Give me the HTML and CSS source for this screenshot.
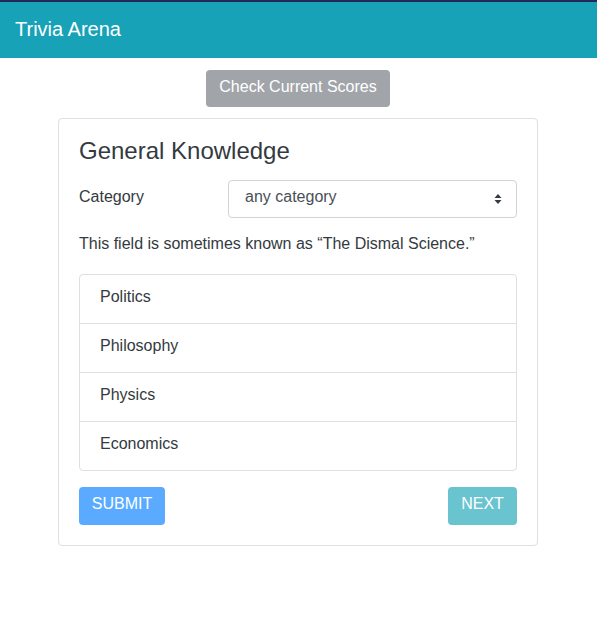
FILE: index.html
```html
<!DOCTYPE html>
<html>
<head>
<meta charset="utf-8">
<link rel="stylesheet" href="styles.css">
</head>
<body>
<nav class="navbar"><span class="brand">Trivia Arena</span></nav>
<main class="main">
  <button class="btn btn-scores">Check Current Scores</button>
  <section class="card">
    <h4 class="card-title">General Knowledge</h4>
    <div class="form-row">
      <label class="label">Category</label>
      <div class="select">
        <span>any category</span>
        <svg class="caret" width="8" height="12" viewBox="0 0 8 12"><path d="M4 1 L7.5 5 H0.5 Z M4 11 L7.5 7 H0.5 Z" fill="#343a40"/></svg>
      </div>
    </div>
    <p class="question">This field is sometimes known as “The Dismal Science.”</p>
    <ul class="list">
      <li class="item">Politics</li>
      <li class="item">Philosophy</li>
      <li class="item">Physics</li>
      <li class="item">Economics</li>
    </ul>
    <div class="actions">
      <button class="btn btn-submit">SUBMIT</button>
      <button class="btn btn-next">NEXT</button>
    </div>
  </section>
</main>
</body>
</html>
```
FILE: styles.css
```css
* { box-sizing: border-box; }
body {
  margin: 0;
  font-family: "Liberation Sans", Arial, sans-serif;
  font-size: 16px;
  line-height: 24px;
  color: #343a40;
  background: #fff;
}
.navbar {
  height: 58px;
  background: #17a2b8;
  border-top: 2px solid #22285a;
  display: flex;
  align-items: center;
  padding: 0 15px;
}
.brand {
  color: #fff;
  font-size: 20px;
  line-height: 28px;
  margin-top: -3px;
}
.main {
  display: flex;
  flex-direction: column;
  align-items: center;
  padding-top: 12px;
  padding-right: 1px;
}
.btn {
  border: none;
  border-radius: 4px;
  color: #fff;
  font-family: inherit;
  font-size: 16px;
  line-height: 24px;
  height: 38px;
  padding: 0 12px 4px;
}
.btn-scores {
  background: #a1a5aa;
  width: 184px;
  height: 37px;
  padding: 0 0 3px;
}
.card {
  width: 480px;
  margin-top: 11px;
  border: 1px solid #dfdfdf;
  border-radius: 4px;
  padding: 20px;
}
.card-title {
  margin: -3px 0 15px;
  font-size: 24px;
  font-weight: 400;
  line-height: 29px;
  color: #343a40;
}
.form-row {
  display: flex;
  align-items: flex-start;
  margin-bottom: 14px;
}
.label {
  width: 149px;
  flex: none;
  padding-top: 5px;
}
.select {
  flex: 1;
  height: 38px;
  border: 1px solid #ced4da;
  border-radius: 4px;
  display: flex;
  align-items: center;
  justify-content: space-between;
  padding: 0 14px 4px 16px;
  color: #495057;
}
.caret { margin-top: 4px; }
.question {
  margin: 0 0 18px;
}
.list {
  list-style: none;
  margin: 0;
  padding: 0;
  border: 1px solid #dfdfdf;
  border-radius: 4px;
}
.item {
  height: 49px;
  padding: 10px 20px 0;
  border-top: 1px solid #dfdfdf;
}
.item:first-child { border-top: none; height: 48px; padding-top: 10px; }
.actions {
  display: flex;
  justify-content: space-between;
  margin-top: 16px;
}
.btn-submit {
  background: #5aabff;
  width: 86px;
}
.btn-next {
  background: #69c4cf;
  width: 69px;
}
```
